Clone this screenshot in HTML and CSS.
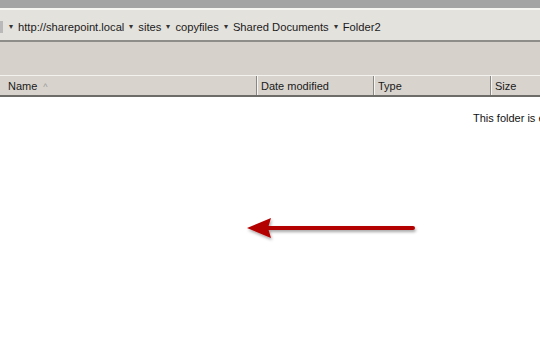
FILE: index.html
```html
<!DOCTYPE html>
<html lang="en">
<head>
  <meta charset="UTF-8">
  <title>Folder2</title>
  <link rel="stylesheet" href="styles.css">
</head>
<body>
  <div class="titlebar"></div>

  <div class="address">
    <span class="icon-edge"></span>
    <span class="sep">&#9662;</span>
    <span class="crumb">http://sharepoint.local</span>
    <span class="sep">&#9662;</span>
    <span class="crumb">sites</span>
    <span class="sep">&#9662;</span>
    <span class="crumb">copyfiles</span>
    <span class="sep">&#9662;</span>
    <span class="crumb">Shared Documents</span>
    <span class="sep">&#9662;</span>
    <span class="crumb">Folder2</span>
  </div>

  <div class="toolbar"></div>

  <div class="columns">
    <div class="col col-name">Name <span class="sort">&#94;</span></div>
    <div class="col col-date">Date modified</div>
    <div class="col col-type">Type</div>
    <div class="col col-size">Size</div>
  </div>

  <div class="content">
    <p class="empty">This folder is empty.</p>

    <!-- annotation arrow -->
    <svg class="arrow" width="200" height="40" viewBox="0 0 200 40">
      <defs>
        <filter id="shadow" x="-10%" y="-50%" width="120%" height="200%">
          <feDropShadow dx="1" dy="2" stdDeviation="1.5" flood-color="#000" flood-opacity="0.35"/>
        </filter>
      </defs>
      <g filter="url(#shadow)">
        <line x1="28" y1="18" x2="173" y2="18" stroke="#b30000" stroke-width="4" stroke-linecap="round"/>
        <polygon points="7,18 31,8 28,18 31,28" fill="#b30000"/>
      </g>
    </svg>
  </div>
</body>
</html>
```

FILE: styles.css
```css
* {
  box-sizing: border-box;
}

html, body {
  height: 100%;
}

body {
  margin: 0;
  font-family: Tahoma, "DejaVu Sans", "Liberation Sans", sans-serif;
  font-size: 11px;
  color: #1a1a1a;
  background: #fff;
  overflow: hidden;
}

.titlebar {
  height: 8px;
  background: #a4a4a4;
}

.address {
  height: 34px;
  display: flex;
  align-items: center;
  padding-top: 3px;
  background: #e4e2dd;
  border-top: 2px solid #f6f5f2;
  border-bottom: 2px solid #8f8d89;
  white-space: nowrap;
  font-family: "Liberation Sans", sans-serif;
  font-size: 11.2px;
}

.icon-edge {
  width: 3px;
  height: 12px;
  background: #b9b9b9;
  margin-right: 5px;
}

.sep {
  font-size: 8px;
  color: #333;
  margin: 0 5px 0 1px;
}

.crumb {
  margin-right: 4px;
}

.toolbar {
  height: 33px;
  background: #d6d2cb;
}

.columns {
  display: flex;
  height: 22px;
  background: #d8d4cd;
  border-top: 1px solid #f4f2ee;
  border-bottom: 2px solid #6e6c69;
  font-family: "Liberation Sans", sans-serif;
  font-size: 11px;
}

.col {
  display: flex;
  align-items: center;
  padding-left: 4px;
  border-right: 1px solid #8a8884;
  box-shadow: 1px 0 0 #f6f5f2;
}

.col-name {
  width: 257px;
  padding-left: 8px;
}

.col-date {
  width: 117px;
}

.col-type {
  width: 117px;
}

.col-size {
  flex: 1;
  border-right: none;
  box-shadow: none;
}

.sort {
  color: #9a9a9a;
  font-size: 9px;
  margin-left: 6px;
  margin-top: 2px;
}

.content {
  position: relative;
  height: 270px;
  background: #fff;
  overflow: hidden;
}

.empty {
  margin: 0;
  padding-top: 15px;
  padding-left: 473px;
  white-space: nowrap;
  font-family: "Liberation Sans", sans-serif;
  font-size: 11px;
  color: #111;
}

.arrow {
  position: absolute;
  left: 240px;
  top: 113px;
}
```
